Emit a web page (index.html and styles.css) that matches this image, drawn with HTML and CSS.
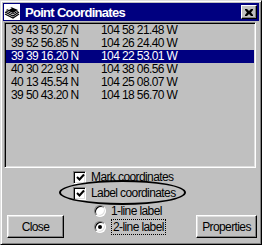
FILE: index.html
```html
<!DOCTYPE html>
<html lang="en">
<head>
    <meta charset="UTF-8">
    <title>Point Coordinates</title>
    <link rel="stylesheet" href="styles.css">
</head>
<body>

    <div class="window">
        <!-- Title bar -->
        <div class="titlebar">
            <svg class="app-icon" width="16" height="16" viewBox="0 0 16 16">
                <rect x="0" y="0" width="16" height="16" fill="#fff"/>
                <polygon points="2,6 7,3 14,6 9,9" fill="#000"/>
                <polygon points="3,5 6,3 8,4 5,6" fill="#fff"/>
                <polyline points="1,8 9,12 15,8" fill="none" stroke="#000" stroke-width="1.2"/>
                <polyline points="1,10 9,14 15,10" fill="none" stroke="#000" stroke-width="1.2"/>
                <polyline points="2,7 9,10 14,7" fill="none" stroke="#000" stroke-width="1"/>
            </svg>
            <span class="title">Point Coordinates</span>
            <button class="close-x">
                <svg width="8" height="7" viewBox="0 0 8 7">
                    <path d="M0 0h2l2 2 2-2h2v1l-2 2.5 2 2.5v1h-2l-2-2-2 2h-2v-1l2-2.5-2-2.5z" fill="#000"/>
                </svg>
            </button>
        </div>

        <!-- Coordinate list -->
        <div class="list">
            <div class="row"><span class="lat">39 43 50.27 N</span><span>104 58 21.48 W</span></div>
            <div class="row"><span class="lat">39 52 56.85 N</span><span>104 26 24.40 W</span></div>
            <div class="row selected"><span class="lat">39 39 16.20 N</span><span>104 22 53.01 W</span></div>
            <div class="row"><span class="lat">40 30 22.93 N</span><span>104 38 06.56 W</span></div>
            <div class="row"><span class="lat">40 13 45.54 N</span><span>104 25 08.07 W</span></div>
            <div class="row"><span class="lat">39 50 43.20 N</span><span>104 18 56.70 W</span></div>
        </div>

        <!-- Options and buttons -->
        <div class="bottom">
            <button class="button close-btn">Close</button>

            <div class="options">
                <div class="check-row">
                    <span class="checkbox">
                        <svg width="9" height="9" viewBox="0 0 9 9">
                            <polyline points="1,4 3.5,6.5 8,1.5" fill="none" stroke="#000" stroke-width="2"/>
                        </svg>
                    </span>
                    <span>Mark coordinates</span>
                </div>
                <div class="check-row">
                    <span class="checkbox">
                        <svg width="9" height="9" viewBox="0 0 9 9">
                            <polyline points="1,4 3.5,6.5 8,1.5" fill="none" stroke="#000" stroke-width="2"/>
                        </svg>
                    </span>
                    <span>Label coordinates</span>
                </div>
                <div class="radio-row first">
                    <span class="radio"></span>
                    <span>1-line label</span>
                </div>
                <div class="radio-row">
                    <span class="radio on"></span>
                    <span class="focus">2-line label</span>
                </div>
            </div>

            <button class="button props-btn">Properties</button>
        </div>

        <!-- hand-drawn annotation -->
        <div class="ellipse"></div>
    </div>

</body>
</html>
```

FILE: styles.css
```css
* {
    margin: 0;
    padding: 0;
    box-sizing: border-box;
}

body {
    font-family: 'Liberation Sans', Arial, sans-serif;
    font-size: 12px;
    letter-spacing: -0.6px;
    color: #000;
    background-color: #c0c0c0;
}

/* Window frame */
.window {
    position: relative;
    width: 262px;
    height: 245px;
    display: flex;
    flex-direction: column;
    background-color: #c0c0c0;
    border: 1px solid;
    border-color: #dfdfdf #000 #000 #dfdfdf;
    box-shadow: inset 1px 1px #fff, inset -1px -1px #808080;
    padding: 2px;
}

/* Title bar */
.titlebar {
    height: 18px;
    display: flex;
    align-items: center;
    background-color: #000080;
    color: #fff;
    padding-left: 1px;
}

.app-icon {
    display: block;
}

.title {
    margin-left: 5px;
    font-size: 13px;
    font-weight: bold;
    letter-spacing: -0.7px;
    flex: 1;
}

.close-x {
    width: 16px;
    height: 14px;
    margin-right: 2px;
    display: flex;
    align-items: center;
    justify-content: center;
    background-color: #c0c0c0;
    border: 1px solid;
    border-color: #fff #000 #000 #fff;
    box-shadow: inset -1px -1px #808080;
}

/* List box */
.list {
    height: 146px;
    margin: 1px 3px 0 1px;
    padding-top: 1px;
    border: 1px solid;
    border-color: #808080 #fff #fff #808080;
    box-shadow: inset 1px 1px #000, inset -1px -1px #dfdfdf;
}

.row {
    height: 13px;
    line-height: 13px;
    margin: 0 1px;
    padding-left: 5px;
    display: flex;
    white-space: nowrap;
}

.row .lat {
    width: 90px;
}

.row.selected {
    background-color: #000080;
    color: #fff;
}

/* Bottom area */
.bottom {
    flex: 1;
    display: flex;
    align-items: flex-start;
}

.options {
    flex: 1;
    padding-top: 1px;
}

.check-row, .radio-row {
    height: 16px;
    display: flex;
    align-items: center;
    white-space: nowrap;
}

.check-row {
    padding-left: 9px;
}

.radio-row {
    padding-left: 30px;
}

.radio-row.first {
    margin-top: 2px;
}

.checkbox {
    width: 13px;
    height: 13px;
    margin-right: 5px;
    display: flex;
    align-items: center;
    justify-content: center;
    background-color: #fff;
    border: 1px solid;
    border-color: #808080 #fff #fff #808080;
    box-shadow: inset 1px 1px #000, inset -1px -1px #dfdfdf;
}

.checkbox svg {
    display: block;
    margin: 1px 0 0 1px;
}

.radio {
    width: 12px;
    height: 12px;
    margin-right: 5px;
    border-radius: 50%;
    background-color: #fff;
    border: 1px solid;
    border-color: #808080 #fff #fff #808080;
    box-shadow: inset 1px 1px #000, inset -1px -1px #dfdfdf;
    position: relative;
}

.radio.on::after {
    content: "";
    position: absolute;
    left: 3px;
    top: 3px;
    width: 4px;
    height: 4px;
    border-radius: 50%;
    background-color: #000;
}

.focus {
    border: 1px dotted #000;
    padding: 0 1px;
    line-height: 14px;
}

/* Push buttons */
.button {
    height: 23px;
    align-self: flex-end;
    margin-bottom: 4px;
    font-family: inherit;
    font-size: 12px;
    letter-spacing: -0.6px;
    background-color: #c0c0c0;
    border: 1px solid;
    border-color: #fff #000 #000 #fff;
    box-shadow: inset -1px -1px #808080, inset 1px 1px #dfdfdf;
}

.close-btn {
    width: 57px;
    margin-left: 4px;
}

.props-btn {
    width: 61px;
    margin-right: 2px;
}

/* Annotation ring round "Label coordinates" */
.ellipse {
    position: absolute;
    left: 58px;
    top: 179px;
    width: 127px;
    height: 25px;
    border: 2px solid #000;
    border-radius: 50%;
}
```
